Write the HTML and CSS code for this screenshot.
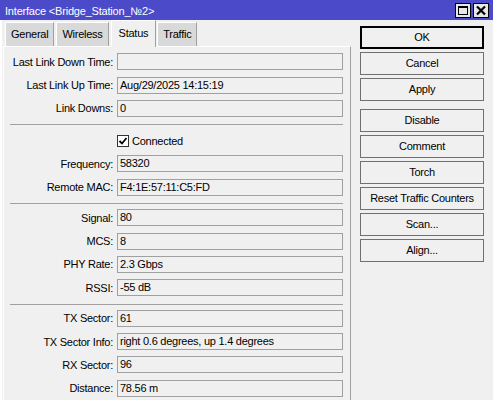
FILE: index.html
```html
<!DOCTYPE html>
<html>
<head>
<meta charset="utf-8">
<link rel="stylesheet" href="styles.css">
</head>
<body>
<div class="window">
  <div class="titlebar">
    <span class="title">Interface &lt;Bridge_Station_№2&gt;</span>
    <div class="wbtns">
      <span class="wbtn"><svg width="14" height="13" viewBox="0 0 14 13"><rect x="2.5" y="2.5" width="9" height="8" fill="none" stroke="#000" stroke-width="1"/><rect x="2" y="2" width="10" height="2" fill="#000"/></svg></span>
      <span class="wbtn"><svg width="14" height="13" viewBox="0 0 14 13"><path d="M3 2.5 L11 10.5 M11 2.5 L3 10.5" stroke="#000" stroke-width="2.2" fill="none"/></svg></span>
    </div>
  </div>
  <div class="main">
    <div class="left">
      <div class="tabs">
        <div class="tab">General</div>
        <div class="tab">Wireless</div>
        <div class="tab active">Status</div>
        <div class="tab">Traffic</div>
      </div>
      <div class="panel">
        <div class="section first">
          <div class="row"><span class="label">Last Link Down Time:</span><div class="field"></div></div>
          <div class="row"><span class="label">Last Link Up Time:</span><div class="field">Aug/29/2025 14:15:19</div></div>
          <div class="row"><span class="label">Link Downs:</span><div class="field">0</div></div>
        </div>
        <div class="sep"></div>
        <div class="section">
          <div class="row check-row"><span class="label"></span><div class="check"><span class="box"><svg width="10" height="10" viewBox="0 0 10 10"><path d="M1.5 5 L4 7.5 L8.5 2" stroke="#000" stroke-width="1.8" fill="none"/></svg></span><span>Connected</span></div></div>
          <div class="row"><span class="label">Frequency:</span><div class="field">58320</div></div>
          <div class="row"><span class="label">Remote MAC:</span><div class="field">F4:1E:57:11:C5:FD</div></div>
        </div>
        <div class="sep"></div>
        <div class="section">
          <div class="row"><span class="label">Signal:</span><div class="field">80</div></div>
          <div class="row"><span class="label">MCS:</span><div class="field">8</div></div>
          <div class="row"><span class="label">PHY Rate:</span><div class="field">2.3 Gbps</div></div>
          <div class="row"><span class="label">RSSI:</span><div class="field">-55 dB</div></div>
        </div>
        <div class="sep"></div>
        <div class="section">
          <div class="row"><span class="label">TX Sector:</span><div class="field">61</div></div>
          <div class="row"><span class="label">TX Sector Info:</span><div class="field">right 0.6 degrees, up 1.4 degrees</div></div>
          <div class="row"><span class="label">RX Sector:</span><div class="field">96</div></div>
          <div class="row"><span class="label">Distance:</span><div class="field">78.56 m</div></div>
        </div>
      </div>
    </div>
    <div class="buttons">
      <div class="group">
        <div class="btn default">OK</div>
        <div class="btn">Cancel</div>
        <div class="btn">Apply</div>
      </div>
      <div class="group">
        <div class="btn">Disable</div>
        <div class="btn">Comment</div>
        <div class="btn">Torch</div>
        <div class="btn">Reset Traffic Counters</div>
        <div class="btn">Scan...</div>
        <div class="btn">Align...</div>
      </div>
    </div>
  </div>
</div>
</body>
</html>
```

FILE: styles.css
```css
html, body {
  margin: 0;
  padding: 0;
}
body {
  width: 493px;
  height: 400px;
  overflow: hidden;
  background: #f0f0f0;
  font-family: "Liberation Sans", Arial, sans-serif;
  font-size: 11px;
  letter-spacing: -0.25px;
  color: #000;
}
.window {
  height: 400px;
  border-left: 2px solid #fff;
  box-sizing: border-box;
}
.titlebar {
  height: 20px;
  background: #4b4bc9;
  display: flex;
  align-items: center;
  justify-content: space-between;
  margin-left: -2px;
  padding-left: 5px;
  padding-right: 4px;
}
.title {
  color: #fff;
  font-size: 11px;
  letter-spacing: -0.2px;
  padding-top: 1px;
}
.wbtns {
  display: flex;
  gap: 2px;
  padding-top: 1px;
}
.wbtn {
  width: 14px;
  height: 13px;
  border: 1px solid #000;
  background: #e8e8e8;
  display: flex;
}
.main {
  display: flex;
  height: 380px;
}
.left {
  margin-left: 1px;
  width: 348px;
  display: flex;
  flex-direction: column;
}
.tabs {
  display: flex;
  align-items: flex-end;
  height: 27px;
  padding-left: 2px;
  position: relative;
  z-index: 1;
}
.tab {
  height: 23px;
  line-height: 23px;
  padding: 0 5px;
  background: #d9d9d9;
  border-top: 1px solid #fff;
  border-left: 1px solid #fff;
  border-right: 1px solid #a0a0a0;
  margin-right: 2px;
}
.tab.active {
  height: 26px;
  line-height: 24px;
  background: #f0f0f0;
  margin-bottom: -1px;
  padding: 0 7px;
  margin-right: 1px;
}
.panel {
  flex: 1;
  border-top: 1px solid #fff;
  border-left: 1px solid #fff;
  border-right: 1px solid #a0a0a0;
  padding-top: 3px;
}
.section {
  display: flex;
  flex-direction: column;
}
.row {
  display: grid;
  grid-template-columns: 109px 226px;
  column-gap: 4px;
  height: 23.4px;
  align-items: center;
}
.check-row {
  height: 25px;
  padding-top: 2px;
  box-sizing: border-box;
}
.label {
  text-align: right;
  white-space: nowrap;
}
.field {
  height: 17px;
  box-sizing: border-box;
  border: 1px solid #a0a0a0;
  background: #f0f0f0;
  padding-left: 2px;
  line-height: 15px;
  white-space: nowrap;
  overflow: hidden;
}
.sep {
  height: 1px;
  background: #a0a0a0;
  margin: 4px 7px 2px 6px;
}
.check {
  display: flex;
  align-items: center;
  gap: 3px;
}
.box {
  width: 12px;
  height: 12px;
  box-sizing: border-box;
  border: 1px solid #333;
  background: #fff;
  display: flex;
  align-items: center;
  justify-content: center;
}
.buttons {
  margin-left: 9px;
  padding-top: 6px;
  width: 124px;
  display: flex;
  flex-direction: column;
  gap: 8px;
}
.group {
  display: flex;
  flex-direction: column;
  gap: 3px;
}
.btn {
  height: 23px;
  box-sizing: border-box;
  border: 1px solid #707070;
  background: #f0f0f0;
  text-align: center;
  line-height: 21px;
  white-space: nowrap;
}
.btn.default {
  border: 2px solid #000;
  line-height: 19px;
}
```
